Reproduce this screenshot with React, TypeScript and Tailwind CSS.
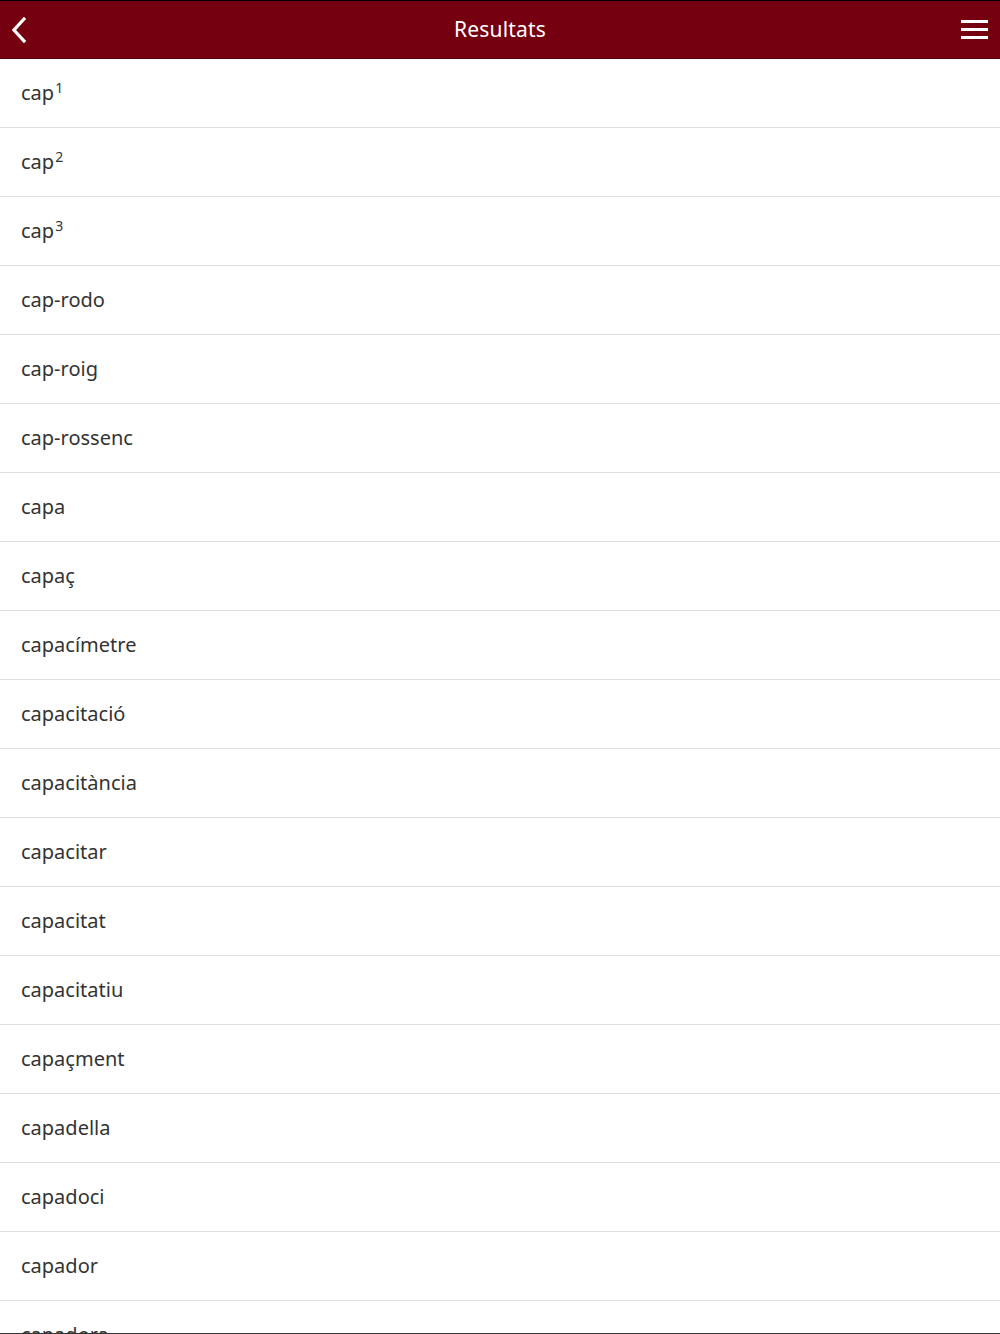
const words: [string, string?][] = [
  ["cap", "1"],
  ["cap", "2"],
  ["cap", "3"],
  ["cap-rodo"],
  ["cap-roig"],
  ["cap-rossenc"],
  ["capa"],
  ["capaç"],
  ["capacímetre"],
  ["capacitació"],
  ["capacitància"],
  ["capacitar"],
  ["capacitat"],
  ["capacitatiu"],
  ["capaçment"],
  ["capadella"],
  ["capadoci"],
  ["capador"],
  ["capadora"],
]

export default function App() {
  return (
    <div className="h-[1334px] overflow-hidden bg-white font-['Noto_Sans',sans-serif] border-b border-[#333]">
      <header className="h-[59px] bg-[#75000f] border-t border-black border-b border-b-[#5a000b] flex items-center justify-between px-3 text-white">
        <button className="w-8 h-10 flex items-center">
          <svg width="18" height="26" viewBox="0 0 18 26" fill="none">
            <path d="M12 2 L2 13 L12 24" stroke="white" strokeWidth="3.2" strokeLinecap="square" />
          </svg>
        </button>
        <h1 className="text-[21px] tracking-[0.2px]">Resultats</h1>
        <button className="w-8 h-10 flex flex-col justify-center items-end gap-[5px]">
          <span className="block w-[27px] h-[3px] bg-white" />
          <span className="block w-[27px] h-[3px] bg-white" />
          <span className="block w-[27px] h-[3px] bg-white" />
        </button>
      </header>
      <ul>
        {words.map(([w, sup], i) => (
          <li
            key={i}
            className="h-[69px] border-b border-[#dedede] flex items-center pl-[21px] text-[20px] text-[#333]"
          >
            <span>
              {w}
              {sup && <sup className="text-[14px] ml-[1px]">{sup}</sup>}
            </span>
          </li>
        ))}
      </ul>
    </div>
  )
}
